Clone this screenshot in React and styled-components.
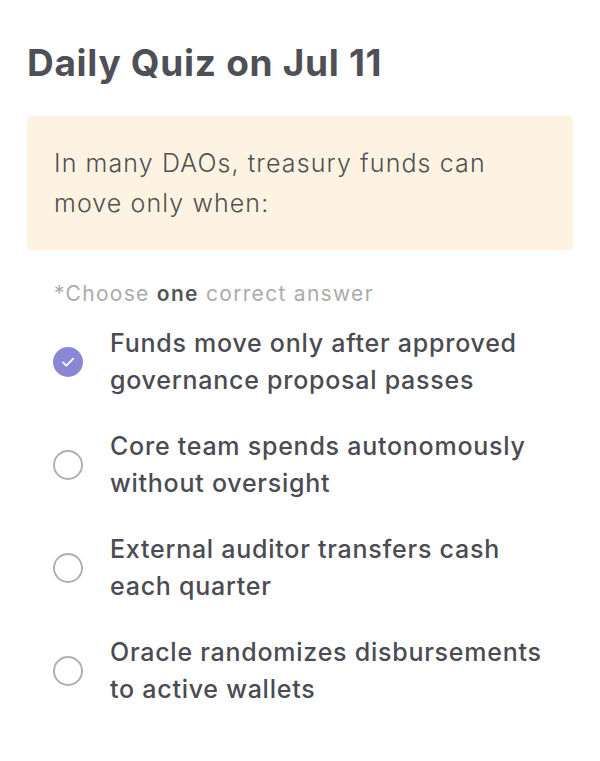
import React, { useState } from 'react'
import styled, { createGlobalStyle } from 'styled-components'

const GlobalStyle = createGlobalStyle`
  body {
    margin: 0;
    background: #fff;
    font-family: Inter, "Noto Sans", sans-serif;
  }
`

const options = [
  'Funds move only after approved governance proposal passes',
  'Core team spends autonomously without oversight',
  'External auditor transfers cash each quarter',
  'Oracle randomizes disbursements to active wallets',
]

function App() {
  const [selected, setSelected] = useState(0)

  return (
    <>
      <GlobalStyle />
      <Page>
        <Title>Daily Quiz on Jul 11</Title>
        <Prompt>In many DAOs, treasury funds can move only when:</Prompt>
        <Hint>*Choose <b>one</b> correct answer</Hint>
        <OptionList>
          {options.map((text, i) => (
            <Option key={i} onClick={() => setSelected(i)}>
              <Radio checked={selected === i}>
                {selected === i && (
                  <svg width="18" height="18" viewBox="0 0 18 18" fill="none">
                    <path d="M4 9.4l3.3 3.2L14 5.8" stroke="#fff" strokeWidth="1.9" strokeLinecap="round" strokeLinejoin="round" />
                  </svg>
                )}
              </Radio>
              <OptionText>{text}</OptionText>
            </Option>
          ))}
        </OptionList>
      </Page>
    </>
  )
}

export default App

const Page = styled.div`
  padding: 37px 27px 40px;
  display: flex;
  flex-direction: column;
`

const Title = styled.h1`
  margin: 0;
  font-size: 37px;
  font-weight: 650;
  color: #4e4f57;
  letter-spacing: 0.7px;
  line-height: 52px;
`

const Prompt = styled.div`
  margin-top: 27px;
  background: #fef3e2;
  border-radius: 3px;
  padding: 27px 60px 27px 27px;
  font-size: 25px;
  font-weight: 300;
  line-height: 40px;
  letter-spacing: 1.1px;
  color: #505050;
`

const Hint = styled.div`
  margin-top: 31px;
  padding-left: 27px;
  font-size: 21px;
  letter-spacing: 1.3px;
  color: #ababab;
  b {
    font-weight: 600;
    color: #555;
  }
`

const OptionList = styled.div`
  margin-top: 19px;
  display: flex;
  flex-direction: column;
  gap: 29px;
`

const Option = styled.div`
  display: flex;
  align-items: center;
  gap: 27px;
  padding-left: 26px;
  cursor: pointer;
`

const Radio = styled.span`
  flex: none;
  width: 30px;
  height: 30px;
  box-sizing: border-box;
  border-radius: 50%;
  display: flex;
  align-items: center;
  justify-content: center;
  background: ${p => (p.checked ? '#8a87d6' : '#fff')};
  border: ${p => (p.checked ? 'none' : '2px solid #b0b0b0')};
`

const OptionText = styled.div`
  font-size: 25px;
  font-weight: 500;
  line-height: 37px;
  letter-spacing: 0.75px;
  color: #4a4b53;
  max-width: 440px;
`
